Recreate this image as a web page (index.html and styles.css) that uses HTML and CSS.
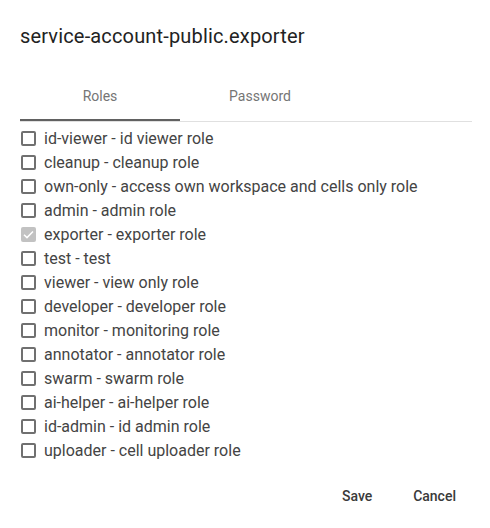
FILE: index.html
```html
<!DOCTYPE html>
<html>
<head>
<meta charset="utf-8">
<link rel="stylesheet" href="styles.css">
</head>
<body>
<div class="dialog">
  <h2 class="title">service-account-public.exporter</h2>
  <div class="tabs">
    <div class="tab active">Roles</div>
    <div class="tab">Password</div>
  </div>
  <ul class="roles">
    <li class="role"><span class="box"></span><span class="label">id-viewer - id viewer role</span></li>
    <li class="role"><span class="box"></span><span class="label">cleanup - cleanup role</span></li>
    <li class="role"><span class="box"></span><span class="label">own-only - access own workspace and cells only role</span></li>
    <li class="role"><span class="box"></span><span class="label">admin - admin role</span></li>
    <li class="role"><span class="box checked"><svg viewBox="0 0 15 15" width="15" height="15"><path d="M3 7.7 L6 10.6 L12 4.5" fill="none" stroke="#fff" stroke-width="1.5"/></svg></span><span class="label">exporter - exporter role</span></li>
    <li class="role"><span class="box"></span><span class="label">test - test</span></li>
    <li class="role"><span class="box"></span><span class="label">viewer - view only role</span></li>
    <li class="role"><span class="box"></span><span class="label">developer - developer role</span></li>
    <li class="role"><span class="box"></span><span class="label">monitor - monitoring role</span></li>
    <li class="role"><span class="box"></span><span class="label">annotator - annotator role</span></li>
    <li class="role"><span class="box"></span><span class="label">swarm - swarm role</span></li>
    <li class="role"><span class="box"></span><span class="label">ai-helper - ai-helper role</span></li>
    <li class="role"><span class="box"></span><span class="label">id-admin - id admin role</span></li>
    <li class="role"><span class="box"></span><span class="label">uploader - cell uploader role</span></li>
  </ul>
  <div class="actions">
    <button class="btn">Save</button>
    <button class="btn">Cancel</button>
  </div>
</div>
</body>
</html>
```

FILE: styles.css
```css
html, body {
  margin: 0;
  padding: 0;
  background: #fff;
}
body {
  font-family: Roboto, "Liberation Sans", sans-serif;
  color: rgba(0, 0, 0, 0.87);
}
.dialog {
  width: 490px;
  box-sizing: border-box;
  padding: 20px 18px 0 20px;
}
.title {
  margin: 0;
  font-size: 20px;
  font-weight: 400;
  line-height: 32px;
  letter-spacing: 0.16px;
  color: #222;
}
.tabs {
  margin-top: 21px;
  display: flex;
  border-bottom: 1px solid #e0e0e0;
}
.tab {
  width: 160px;
  height: 46px;
  display: flex;
  align-items: center;
  justify-content: center;
  font-size: 14px;
  color: #757575;
}
.tabs .tab {
  border-bottom: 2px solid transparent;
}
.tabs .tab.active {
  border-bottom-color: #616161;
}
.roles {
  list-style: none;
  margin: 4px 0 0 0;
  padding: 0;
}
.role {
  height: 24px;
  display: flex;
  align-items: center;
}
.box {
  width: 15px;
  height: 15px;
  box-sizing: border-box;
  border: 2px solid #707070;
  border-radius: 2px;
  margin: 1px 8px 0 1px;
  flex: none;
}
.box.checked {
  border: none;
  background: #c2c2c2;
}
.box svg {
  display: block;
}
.label {
  font-size: 16px;
  color: #444;
}
.actions {
  margin-top: 16px;
  display: flex;
  justify-content: flex-end;
  gap: 8px;
}
.btn {
  font-family: Roboto, "Liberation Sans", sans-serif;
  font-size: 14px;
  font-weight: 500;
  height: 36px;
  min-width: 64px;
  padding: 0 16px;
  border: none;
  background: transparent;
  color: #3a3a3a;
  border-radius: 4px;
}
```
